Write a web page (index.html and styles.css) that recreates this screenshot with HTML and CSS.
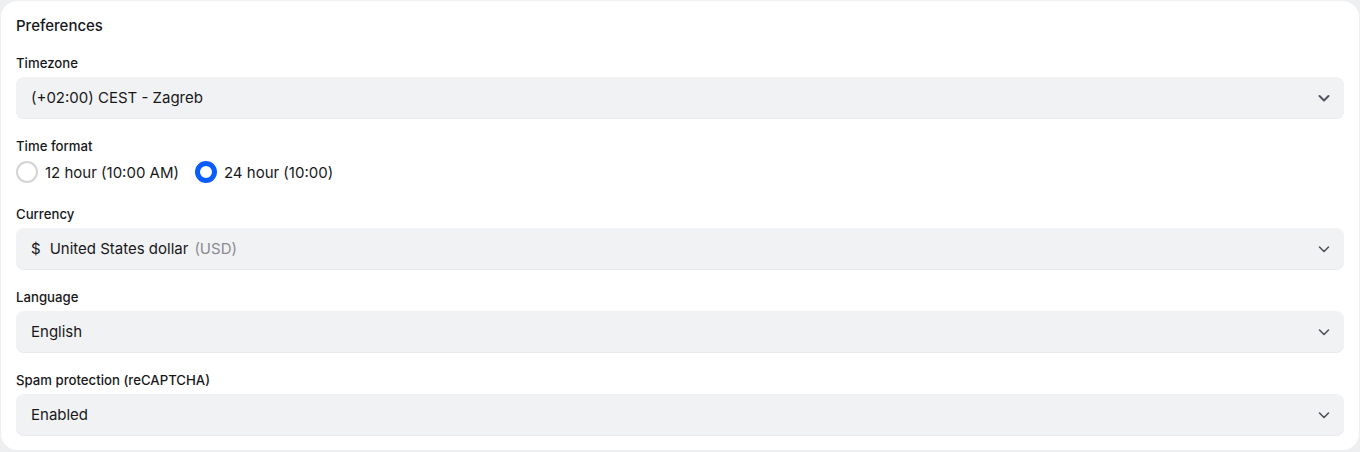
FILE: index.html
```html
<!DOCTYPE html>
<html lang="en">
<head>
    <meta charset="UTF-8">
    <title>Preferences</title>
    <link rel="stylesheet" href="styles.css">
</head>
<body>
    <div class="card">
        <h2 class="card-title">Preferences</h2>

        <div class="field">
            <div class="label">Timezone</div>
            <div class="select">
                <span class="value">(+02:00) CEST - Zagreb</span>
                <svg class="chevron" width="14" height="14" viewBox="0 0 14 14"><path d="M2.5 5l4.5 4.5L11.5 5" fill="none" stroke="currentColor" stroke-width="2" stroke-linecap="round" stroke-linejoin="round"/></svg>
            </div>
        </div>

        <div class="field field-radios">
            <div class="label label-tight">Time format</div>
            <div class="radios">
                <label class="radio"><span class="dot"></span>12 hour (10:00 AM)</label>
                <label class="radio checked"><span class="dot"></span>24 hour (10:00)</label>
            </div>
        </div>

        <div class="field">
            <div class="label">Currency</div>
            <div class="select">
                <span class="value"><span class="symbol">$</span>United States dollar <span class="muted">(USD)</span></span>
                <svg class="chevron" width="14" height="14" viewBox="0 0 14 14"><path d="M2.5 5l4.5 4.5L11.5 5" fill="none" stroke="currentColor" stroke-width="1.6" stroke-linecap="round" stroke-linejoin="round"/></svg>
            </div>
        </div>

        <div class="field">
            <div class="label">Language</div>
            <div class="select">
                <span class="value">English</span>
                <svg class="chevron" width="14" height="14" viewBox="0 0 14 14"><path d="M2.5 5l4.5 4.5L11.5 5" fill="none" stroke="currentColor" stroke-width="1.6" stroke-linecap="round" stroke-linejoin="round"/></svg>
            </div>
        </div>

        <div class="field">
            <div class="label">Spam protection (reCAPTCHA)</div>
            <div class="select">
                <span class="value">Enabled</span>
                <svg class="chevron" width="14" height="14" viewBox="0 0 14 14"><path d="M2.5 5l4.5 4.5L11.5 5" fill="none" stroke="currentColor" stroke-width="1.6" stroke-linecap="round" stroke-linejoin="round"/></svg>
            </div>
        </div>
    </div>
</body>
</html>
```

FILE: styles.css
```css
body {
    margin: 0;
    padding: 0;
    background: #eeeff1;
    font-family: Inter, "Noto Sans", sans-serif;
    color: #18181b;
}
.card {
    background: #fff;
    margin: 1px 1px 0 1px;
    height: 449px;
    box-sizing: border-box;
    border-radius: 16px;
    padding: 14px 15px 0 15px;
}
.card-title {
    margin: 0 0 17px 0;
    font-size: 15px;
    font-weight: 500;
    line-height: 22px;
}
.field {
    margin-bottom: 19px;
}
.field-radios {
    margin-bottom: 22px;
}
.label {
    font-size: 13.2px;
    font-weight: 500;
    line-height: 18px;
    margin-bottom: 5px;
}
.label-tight {
    margin-bottom: 6px;
}
.select {
    display: flex;
    align-items: center;
    justify-content: space-between;
    height: 41px;
    background: #f1f2f4;
    border-radius: 8px;
    padding: 0 13px 0 15px;
    box-shadow: 0 1px 0 #e8e9ec;
    font-size: 15px;
}
.value {
    display: flex;
    align-items: center;
}
.symbol {
    margin-right: 9px;
}
.muted {
    color: #8a8a92;
    margin-left: 6px;
}
.chevron {
    color: #52525b;
}
.radios {
    display: flex;
    gap: 16px;
    font-size: 15px;
}
.radio {
    display: flex;
    align-items: center;
    gap: 7px;
}
.dot {
    width: 18px;
    height: 18px;
    border: 2px solid #d4d4d8;
    border-radius: 50%;
}
.radio.checked .dot {
    width: 12px;
    height: 12px;
    border: 5px solid #0a5cff;
}
```
